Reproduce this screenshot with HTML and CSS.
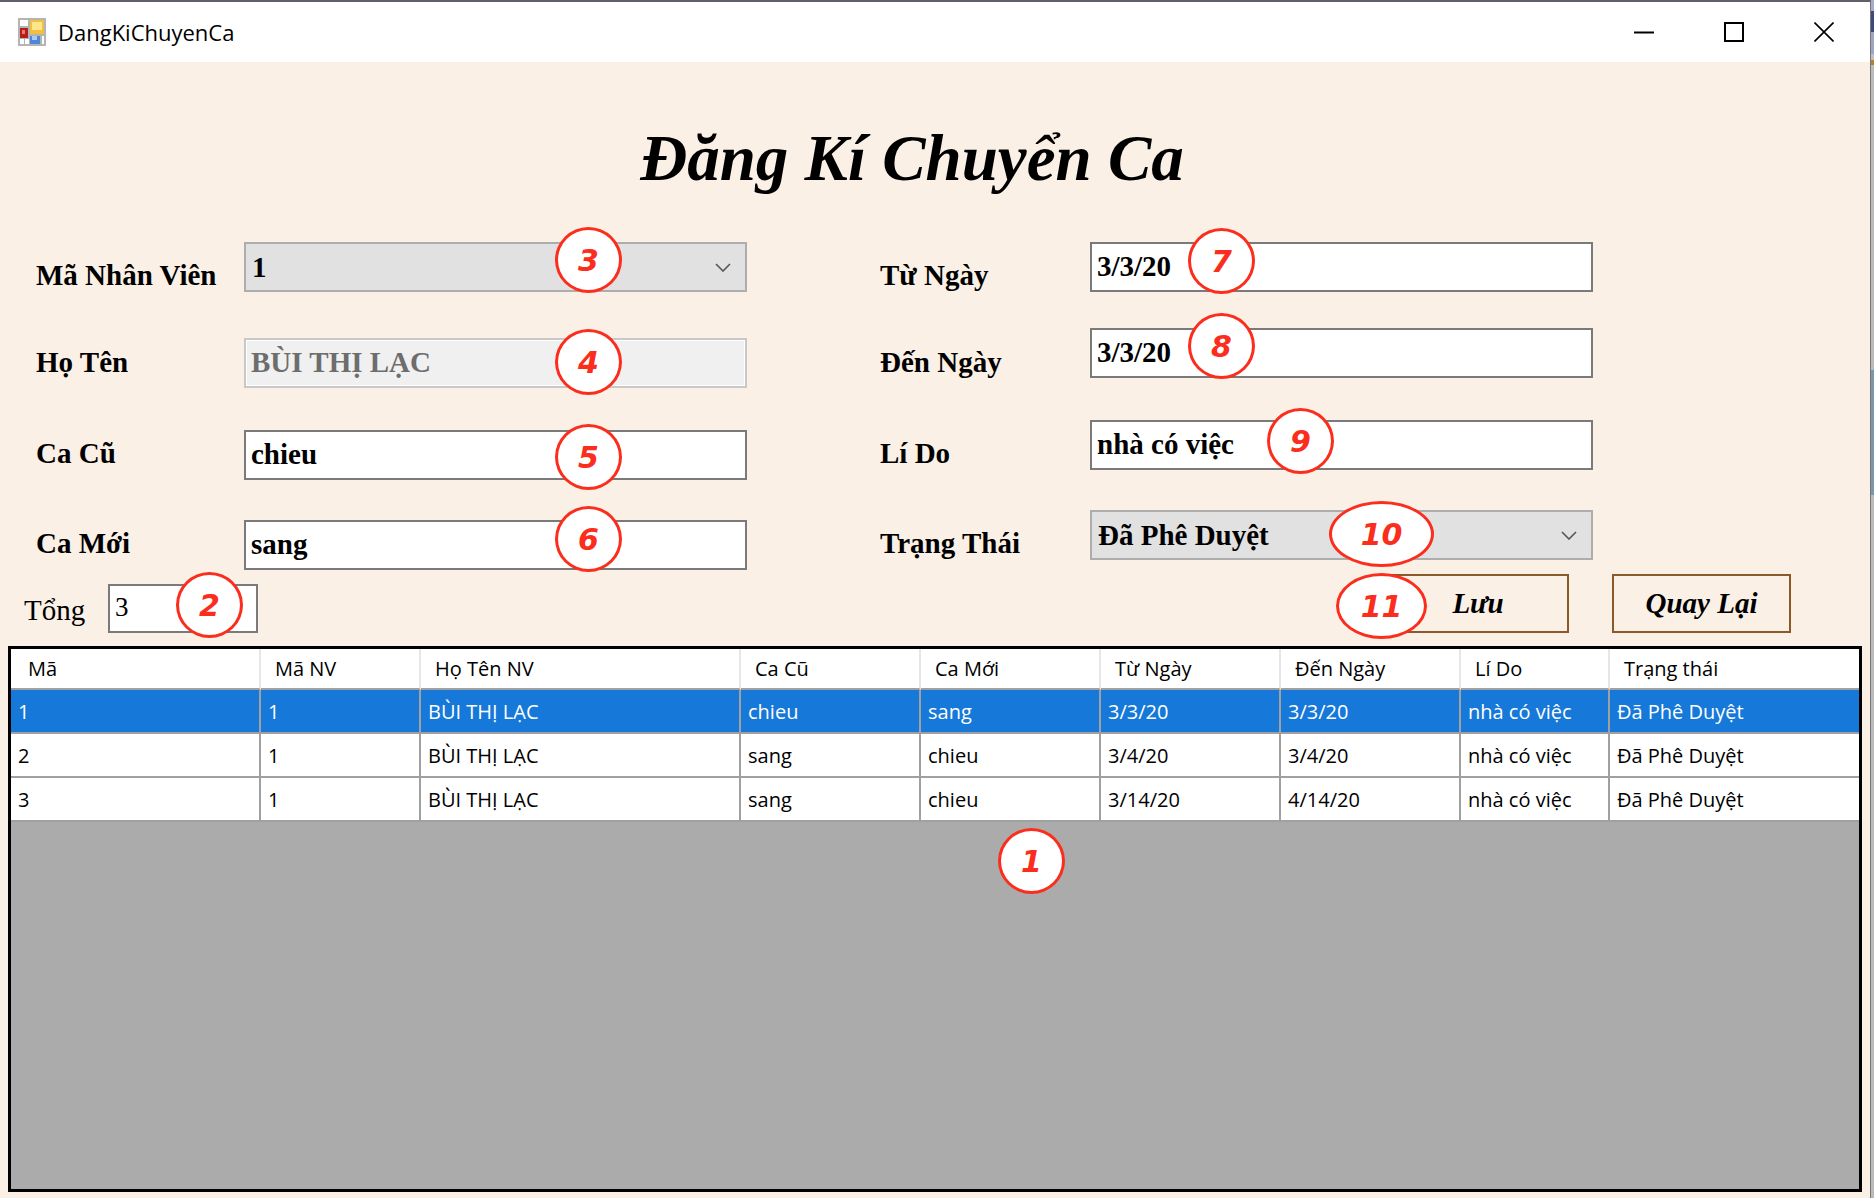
FILE: index.html
```html
<!DOCTYPE html>
<html lang="vi">
<head>
  <meta charset="UTF-8">
  <title>DangKiChuyenCa</title>
  <link rel="stylesheet" href="styles.css">
</head>
<body>
  <div class="window">
    <div class="titlebar">
      <svg class="app-icon" viewBox="0 0 28 28">
        <rect width="28" height="28" fill="#b4b4b4"/>
        <rect x="2" y="2" width="8" height="6" fill="#fff"/>
        <rect x="2" y="21" width="4" height="5" fill="#fff"/>
        <rect x="7" y="21" width="4" height="5" fill="#fff"/>
        <rect x="24" y="18" width="2" height="8" fill="#fff"/>
        <rect x="2" y="10" width="8" height="10" fill="#b3201c"/>
        <rect x="4" y="12" width="3" height="4" fill="#e87a6c"/>
        <rect x="12" y="2" width="14" height="14" fill="#f0c040"/>
        <rect x="14" y="4" width="10" height="8" fill="#ffe68a"/>
        <rect x="12" y="18" width="10" height="8" fill="#4f86d8"/>
        <rect x="14" y="18" width="5" height="4" fill="#a9c8f2"/>
      </svg>
      <span class="app-name">DangKiChuyenCa</span>
      <div class="controls">
        <svg class="ctl" viewBox="0 0 20 20"><path d="M0 10.5h20" stroke="#000" stroke-width="2" fill="none"/></svg>
        <svg class="ctl" viewBox="0 0 20 20"><rect x="1" y="1" width="18" height="18" stroke="#000" stroke-width="2" fill="none"/></svg>
        <svg class="ctl" viewBox="0 0 20 20"><path d="M0.5 0.5l19 19M19.5 0.5l-19 19" stroke="#000" stroke-width="1.6" fill="none"/></svg>
      </div>
    </div>

    <div class="content">
      <header class="heading">
        <h1>Đăng Kí Chuyển Ca</h1>
      </header>

      <div class="form">
        <div class="form-col">
          <div class="labels">
            <label>Mã Nhân Viên</label>
            <label>Họ Tên</label>
            <label>Ca Cũ</label>
            <label>Ca Mới</label>
          </div>
          <div class="fields fields-left">
            <div class="field select">1
              <svg class="chevron" viewBox="0 0 16 9"><path d="M1 1l7 7 7-7" stroke="#555" stroke-width="1.6" fill="none"/></svg>
            </div>
            <div class="field disabled">BÙI THỊ LẠC</div>
            <div class="field">chieu</div>
            <div class="field">sang</div>
          </div>
        </div>
        <div class="form-col">
          <div class="labels labels-right">
            <label>Từ Ngày</label>
            <label>Đến Ngày</label>
            <label>Lí Do</label>
            <label>Trạng Thái</label>
          </div>
          <div class="fields fields-right">
            <div class="field">3/3/20</div>
            <div class="field">3/3/20</div>
            <div class="field">nhà có việc</div>
            <div class="field select">Đã Phê Duyệt
              <svg class="chevron" viewBox="0 0 16 9"><path d="M1 1l7 7 7-7" stroke="#555" stroke-width="1.6" fill="none"/></svg>
            </div>
          </div>
        </div>
      </div>

      <div class="actions">
        <div class="total">
          <span class="total-label">Tổng</span>
          <div class="total-box">3</div>
        </div>
        <div class="buttons">
          <button class="btn btn-save">Lưu</button>
          <button class="btn btn-back">Quay Lại</button>
        </div>
      </div>

      <div class="grid">
        <table>
          <colgroup>
            <col class="c-ma"><col class="c-manv"><col class="c-ten"><col class="c-ca"><col class="c-ca">
            <col class="c-ca"><col class="c-ca"><col class="c-lido"><col class="c-tt">
          </colgroup>
          <thead>
            <tr>
              <th class="first">Mã</th><th>Mã NV</th><th>Họ Tên NV</th><th>Ca Cũ</th><th>Ca Mới</th>
              <th>Từ Ngày</th><th>Đến Ngày</th><th>Lí Do</th><th>Trạng thái</th>
            </tr>
          </thead>
          <tbody>
            <tr class="selected">
              <td>1</td><td>1</td><td>BÙI THỊ LẠC</td><td>chieu</td><td>sang</td>
              <td>3/3/20</td><td>3/3/20</td><td>nhà có việc</td><td>Đã Phê Duyệt</td>
            </tr>
            <tr>
              <td>2</td><td>1</td><td>BÙI THỊ LẠC</td><td>sang</td><td>chieu</td>
              <td>3/4/20</td><td>3/4/20</td><td>nhà có việc</td><td>Đã Phê Duyệt</td>
            </tr>
            <tr>
              <td>3</td><td>1</td><td>BÙI THỊ LẠC</td><td>sang</td><td>chieu</td>
              <td>3/14/20</td><td>4/14/20</td><td>nhà có việc</td><td>Đã Phê Duyệt</td>
            </tr>
          </tbody>
        </table>
      </div>
    </div>

    <!-- red callouts drawn over the form -->
    <span class="mark m1">1</span>
    <span class="mark m2">2</span>
    <span class="mark m3">3</span>
    <span class="mark m4">4</span>
    <span class="mark m5">5</span>
    <span class="mark m6">6</span>
    <span class="mark m7">7</span>
    <span class="mark m8">8</span>
    <span class="mark m9">9</span>
    <span class="mark m10">10</span>
    <span class="mark m11">11</span>
  </div>
  <div class="desktop-edge"></div>
</body>
</html>
```

FILE: styles.css
```css
html, body {
  margin: 0;
  padding: 0;
  height: 100%;
  overflow: hidden;
}

body {
  display: flex;
  font-family: "Liberation Serif", serif;
  color: #000;
  background: #bbb;
}

.window {
  position: relative;
  flex: 1;
  height: 1198px;
  box-sizing: border-box;
  border-top: 2px solid #5f6068;
  border-right: 1px solid #777;
  background: #faf0e6;
}

.desktop-edge {
  width: 3px;
  background: linear-gradient(to bottom,
    #a9abc9 0, #a9abc9 11px, #3e4a78 11px, #3e4a78 32px, #a0a3c4 32px, #a0a3c4 54px,
    #c0c0c0 54px, #c0c0c0 60px, #b8802c 60px, #b8802c 65px, #bbb 65px, #bbb 370px,
    #7c98a8 370px, #7c98a8 495px, #bbb 495px);
}

/* title bar */
.titlebar {
  display: flex;
  align-items: center;
  height: 60px;
  padding-left: 18px;
  background: #fff;
}

.app-icon {
  width: 28px;
  height: 28px;
}

.app-name {
  margin-left: 12px;
  font-family: "Open Sans", sans-serif;
  font-size: 22px;
}

.controls {
  display: flex;
  gap: 70px;
  margin-left: auto;
  padding-right: 36px;
}

.ctl {
  width: 20px;
  height: 20px;
}

/* heading */
.heading {
  height: 180px;
  padding: 60px 46px 0 0;
  box-sizing: border-box;
  text-align: center;
}

.heading h1 {
  margin: 0;
  font-size: 65px;
  line-height: 72px;
  font-style: italic;
  font-weight: bold;
}

/* form */
.form {
  display: flex;
  gap: 133px;
  padding-left: 36px;
}

.form-col {
  display: flex;
  width: 711px;
}

.form-col:last-child {
  width: 713px;
}

.labels {
  display: grid;
  grid-template-rows: 87px 91px 90px 40px;
  width: 208px;
  padding-top: 13px;
  height: 308px;
}

.labels-right {
  width: 210px;
}

.labels label {
  font-size: 29px;
  font-weight: bold;
  line-height: 40px;
}

.fields {
  display: grid;
  width: 503px;
}

.fields-left {
  grid-template-rows: 96px 92px 90px 50px;
}

.fields-right {
  grid-template-rows: 86px 92px 90px 50px;
}

.field {
  display: flex;
  align-items: center;
  height: 50px;
  box-sizing: border-box;
  padding: 0 5px 2px;
  border: 2px solid #7a7a7a;
  background: #fff;
  font-size: 29px;
  font-weight: bold;
}

.field.select {
  justify-content: space-between;
  padding: 0 14px 0 6px;
  border-color: #adadad;
  background: #e1e1e1;
}

.field.disabled {
  border-color: #c8c8c8;
  background: #f0f0f0;
  box-shadow: inset 0 0 0 1px #fff;
  color: #6d6d6d;
}

.chevron {
  width: 16px;
  height: 9px;
  margin-top: 1px;
}

/* total and buttons */
.actions {
  display: flex;
  justify-content: space-between;
  align-items: flex-end;
  height: 59px;
  margin-top: 4px;
  padding: 0 79px 0 24px;
}

.total {
  display: flex;
  align-items: center;
}

.total-label {
  width: 84px;
  padding-top: 3px;
  font-size: 29px;
}

.total-box {
  width: 150px;
  height: 49px;
  box-sizing: border-box;
  padding: 0 5px 4px;
  border: 2px solid #7a7a7a;
  background: #fff;
  font-size: 27px;
  line-height: 42px;
}

.buttons {
  display: flex;
  gap: 43px;
}

.btn {
  height: 59px;
  padding: 0;
  border: 2px solid #8b5a2b;
  background: #faf0e6;
  font-family: "Liberation Serif", serif;
  font-size: 29px;
  font-weight: bold;
  font-style: italic;
}

.btn-save {
  width: 182px;
}

.btn-back {
  width: 179px;
}

/* data grid */
.grid {
  height: 546px;
  margin: 13px 8px 0;
  box-sizing: border-box;
  border: 3px solid #000;
  background: #ababab;
}

.grid table {
  width: 1848px;
  table-layout: fixed;
  border-spacing: 0;
  font-family: "Open Sans", sans-serif;
  font-size: 20px;
}

.c-ma { width: 250px; }
.c-manv { width: 160px; }
.c-ten { width: 320px; }
.c-ca { width: 180px; }
.c-lido { width: 149px; }
.c-tt { width: 249px; }

.grid th {
  height: 41px;
  box-sizing: border-box;
  padding: 0 0 0 14px;
  border-right: 2px solid #e6e6e6;
  border-bottom: 2px solid #a0a0a0;
  background: #fff;
  font-weight: normal;
  text-align: left;
}

.grid th.first {
  padding-left: 17px;
}

.grid td {
  height: 44px;
  box-sizing: border-box;
  padding: 0 0 0 7px;
  border-right: 2px solid #a0a0a0;
  border-bottom: 2px solid #a0a0a0;
  background: #fff;
  white-space: nowrap;
}

.grid th:last-child,
.grid td:last-child {
  border-right: 0;
}

.grid .selected td {
  background: #1678d8;
  color: #fff;
}

/* callouts */
.mark {
  position: absolute;
  display: flex;
  align-items: center;
  justify-content: center;
  width: 67px;
  height: 66px;
  box-sizing: border-box;
  border: 3px solid #fb2d1c;
  border-radius: 50%;
  background: #fff;
  color: #fb2d1c;
  font-family: "DejaVu Sans", sans-serif;
  font-size: 30px;
  font-weight: bold;
  font-style: italic;
}

.m1 { left: 998px; top: 826px; }
.m2 { left: 176px; top: 570px; }
.m3 { left: 555px; top: 225px; }
.m4 { left: 555px; top: 327px; }
.m5 { left: 555px; top: 422px; }
.m6 { left: 555px; top: 504px; }
.m7 { left: 1188px; top: 226px; }
.m8 { left: 1188px; top: 311px; }
.m9 { left: 1267px; top: 406px; }
.m10 { left: 1329px; top: 499px; width: 105px; }
.m11 { left: 1336px; top: 571px; width: 91px; }
```
